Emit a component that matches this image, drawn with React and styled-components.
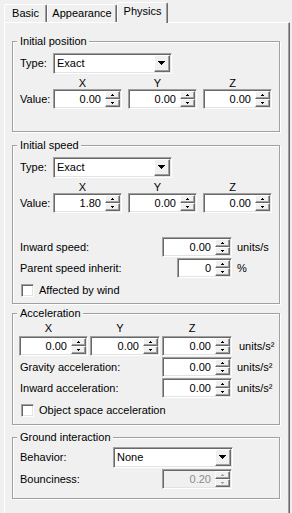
import React from 'react';
import styled, { createGlobalStyle } from 'styled-components';

const GlobalStyle = createGlobalStyle`
    html, body {
        margin: 0;
        padding: 0;
        background: #f0f0f0;
    }
    body {
        font-family: "Liberation Sans", Arial, sans-serif;
        font-size: 11px;
        color: #000;
    }
`

const Window = styled.div`
    width: 292px;
    height: 513px;
    overflow: hidden;
    padding-left: 4px;
    box-sizing: border-box;
    background: #f0f0f0;
`

const TabBar = styled.div`
    display: flex;
    align-items: flex-end;
    height: 22px;
`

const Tab = styled.div`
    position: relative;
    z-index: ${p => p.$active ? 2 : 0};
    box-sizing: border-box;
    width: ${p => p.$w}px;
    height: ${p => p.$active ? 21 : 18}px;
    margin-bottom: ${p => p.$active ? -1 : 0}px;
    padding-top: 2px;
    background: #f0f0f0;
    border: 1px solid #fff;
    border-bottom: none;
    border-right-color: #696969;
    box-shadow: inset -1px 0 #a0a0a0;
    border-radius: 2px 2px 0 0;
    text-align: center;
    line-height: 13px;
    white-space: nowrap;
`

const Panel = styled.div`
    box-sizing: border-box;
    width: 286px;
    height: 500px;
    border-top: 1px solid #fff;
    border-left: 1px solid #fff;
    border-right: 1px solid #696969;
    box-shadow: inset -1px 0 #a0a0a0;
    padding: 18px 0 0 7px;
    display: flex;
    flex-direction: column;
`

const Group = styled.div`
    box-sizing: border-box;
    width: 268px;
    height: ${p => p.$h}px;
    margin-top: ${p => p.$mt || 0}px;
    flex: none;
    border: 1px solid #a0a0a0;
    box-shadow: inset 1px 1px #fff, 1px 1px #fff;
    padding-left: 7px;
    display: flex;
    flex-direction: column;
`

const Caption = styled.div`
    align-self: flex-start;
    height: 13px;
    margin: -7px 0 0 -3px;
    padding: 0 2px 0 3px;
    line-height: 13px;
    background: #f0f0f0;
    white-space: nowrap;
`

const Row = styled.div`
    display: flex;
    align-items: ${p => p.$end ? 'flex-end' : 'center'};
    gap: ${p => p.$gap || 0}px;
    margin-top: ${p => p.$mt || 0}px;
    margin-left: ${p => p.$ml || 0}px;
`

const Label = styled.div`
    flex: none;
    width: ${p => p.$w ? p.$w + 'px' : 'auto'};
    height: ${p => p.$h ? p.$h + 'px' : 'auto'};
    line-height: ${p => p.$h ? p.$h : 13}px;
    white-space: nowrap;
`

const Unit = styled.div`
    margin-left: 5px;
    margin-bottom: ${p => p.$mb || 0}px;
    line-height: 13px;
    white-space: nowrap;
`

const AxisColumn = styled.div`
    display: flex;
    flex-direction: column;
    width: ${p => p.$w}px;
`

const AxisLabel = styled.div`
    width: calc(100% - 10px);
    height: 12px;
    margin-bottom: ${p => p.$mb || 0}px;
    line-height: 13px;
    text-align: center;
`

const Sunken = styled.div`
    box-sizing: border-box;
    flex: none;
    display: flex;
    width: ${p => p.$w}px;
    height: ${p => p.$h || 20}px;
    padding: 1px;
    background: ${p => p.$disabled ? '#f0f0f0' : '#fff'};
    border: 1px solid;
    border-color: #a0a0a0 #fff #fff #a0a0a0;
    box-shadow: inset 1px 1px #696969, inset -1px -1px #e3e3e3;
`

const SpinValue = styled.div`
    flex: 1;
    padding-right: 4px;
    line-height: 16px;
    text-align: right;
    color: ${p => p.$disabled ? '#8d8d8d' : '#000'};
`

const Spinner = styled.div`
    width: 15px;
    display: flex;
    flex-direction: column;
`

const RaisedButton = styled.div`
    box-sizing: border-box;
    flex: 1;
    display: flex;
    align-items: center;
    justify-content: center;
    background: #f0f0f0;
    border: 1px solid;
    border-color: #fff #696969 #696969 #fff;
    box-shadow: inset -1px -1px #a0a0a0;
    padding: 0 1px 1px 0;
`

const ComboText = styled.div`
    flex: 1;
    padding-left: 2px;
    line-height: 17px;
`

const ComboButton = styled(RaisedButton)`
    flex: none;
    width: 16px;
`

const CheckRow = styled.div`
    display: flex;
    align-items: center;
    gap: 5px;
    margin-top: ${p => p.$mt || 0}px;
    margin-left: 1px;
    height: 13px;
`

const CheckBox = styled.div`
    box-sizing: border-box;
    width: 13px;
    height: 13px;
    background: #fff;
    border: 1px solid;
    border-color: #a0a0a0 #fff #fff #a0a0a0;
    box-shadow: inset 1px 1px #696969, inset -1px -1px #e3e3e3;
`

// tiny pixel triangle, rows = height, width = rows * 2 - 1
const Tri = ({ rows, up, color = '#000' }) => {
    const w = rows * 2 - 1;
    const rects = [];
    for (let i = 0; i < rows; i++) {
        const rw = up ? i * 2 + 1 : w - i * 2;
        rects.push(<rect key={i} x={(w - rw) / 2} y={i} width={rw} height={1} fill={color} />);
    }
    return <svg width={w} height={rows} shapeRendering="crispEdges">{rects}</svg>;
}

const Spin = ({ value, w, disabled }) => {
    const c = disabled ? '#a0a0a0' : '#000';
    return (
        <Sunken $w={w} $disabled={disabled}>
            <SpinValue $disabled={disabled}>{value}</SpinValue>
            <Spinner>
                <RaisedButton><Tri rows={2} up color={c} /></RaisedButton>
                <RaisedButton><Tri rows={2} color={c} /></RaisedButton>
            </Spinner>
        </Sunken>
    )
}

const Combo = ({ value, w }) => (
    <Sunken $w={w} $h={21}>
        <ComboText>{value}</ComboText>
        <ComboButton><Tri rows={4} /></ComboButton>
    </Sunken>
)

const AxisRow = ({ values, widths, mb }) => values.map((v, ix) => (
    <AxisColumn key={ix} $w={widths[ix]}>
        <AxisLabel $mb={mb}>{['X', 'Y', 'Z'][ix]}</AxisLabel>
        <Spin value={v} w={widths[ix]} />
    </AxisColumn>
))

export default function App() {
    return (
        <>
            <GlobalStyle />
            <Window>
                <TabBar>
                    <Tab $w={43}>Basic</Tab>
                    <Tab $w={70}>Appearance</Tab>
                    <Tab $w={51} $active>Physics</Tab>
                </TabBar>
                <Panel>
                    <Group $h={91}>
                        <Caption>Initial position</Caption>
                        <Row $mt={5}>
                            <Label $w={33}>Type:</Label>
                            <Combo value="Exact" w={119} />
                        </Row>
                        <Row $mt={3} $end $gap={6}>
                            <Label $w={27} $h={20}>Value:</Label>
                            <AxisRow values={['0.00', '0.00', '0.00']} widths={[69, 69, 69]} />
                        </Row>
                    </Group>

                    <Group $h={159} $mt={13}>
                        <Caption>Initial speed</Caption>
                        <Row $mt={5}>
                            <Label $w={33}>Type:</Label>
                            <Combo value="Exact" w={119} />
                        </Row>
                        <Row $mt={3} $end $gap={6}>
                            <Label $w={27} $h={20}>Value:</Label>
                            <AxisRow values={['1.80', '0.00', '0.00']} widths={[69, 69, 69]} />
                        </Row>
                        <Row $mt={24}>
                            <Label $w={142}>Inward speed:</Label>
                            <Spin value="0.00" w={70} />
                            <Unit>units/s</Unit>
                        </Row>
                        <Row $mt={1}>
                            <Label $w={157}>Parent speed inherit:</Label>
                            <Spin value="0" w={55} />
                            <Unit>%</Unit>
                        </Row>
                        <CheckRow $mt={6}>
                            <CheckBox />
                            <Label>Affected by wind</Label>
                        </CheckRow>
                    </Group>

                    <Group $h={112} $mt={9}>
                        <Caption>Acceleration</Caption>
                        <Row $mt={2} $ml={-1} $end $gap={2}>
                            <AxisRow values={['0.00', '0.00', '0.00']} widths={[69, 70, 70]} mb={2} />
                            <Unit $mb={3}>units/s²</Unit>
                        </Row>
                        <Row $mt={1}>
                            <Label $w={142}>Gravity acceleration:</Label>
                            <Spin value="0.00" w={70} />
                            <Unit>units/s²</Unit>
                        </Row>
                        <Row $mt={1}>
                            <Label $w={142}>Inward acceleration:</Label>
                            <Spin value="0.00" w={70} />
                            <Unit>units/s²</Unit>
                        </Row>
                        <CheckRow $mt={6}>
                            <CheckBox />
                            <Label>Object space acceleration</Label>
                        </CheckRow>
                    </Group>

                    <Group $h={62} $mt={12}>
                        <Caption>Ground interaction</Caption>
                        <Row $mt={3}>
                            <Label $w={93}>Behavior:</Label>
                            <Combo value="None" w={120} />
                        </Row>
                        <Row $mt={1}>
                            <Label $w={142}>Bounciness:</Label>
                            <Spin value="0.20" w={70} disabled />
                        </Row>
                    </Group>
                </Panel>
            </Window>
        </>
    )
}
